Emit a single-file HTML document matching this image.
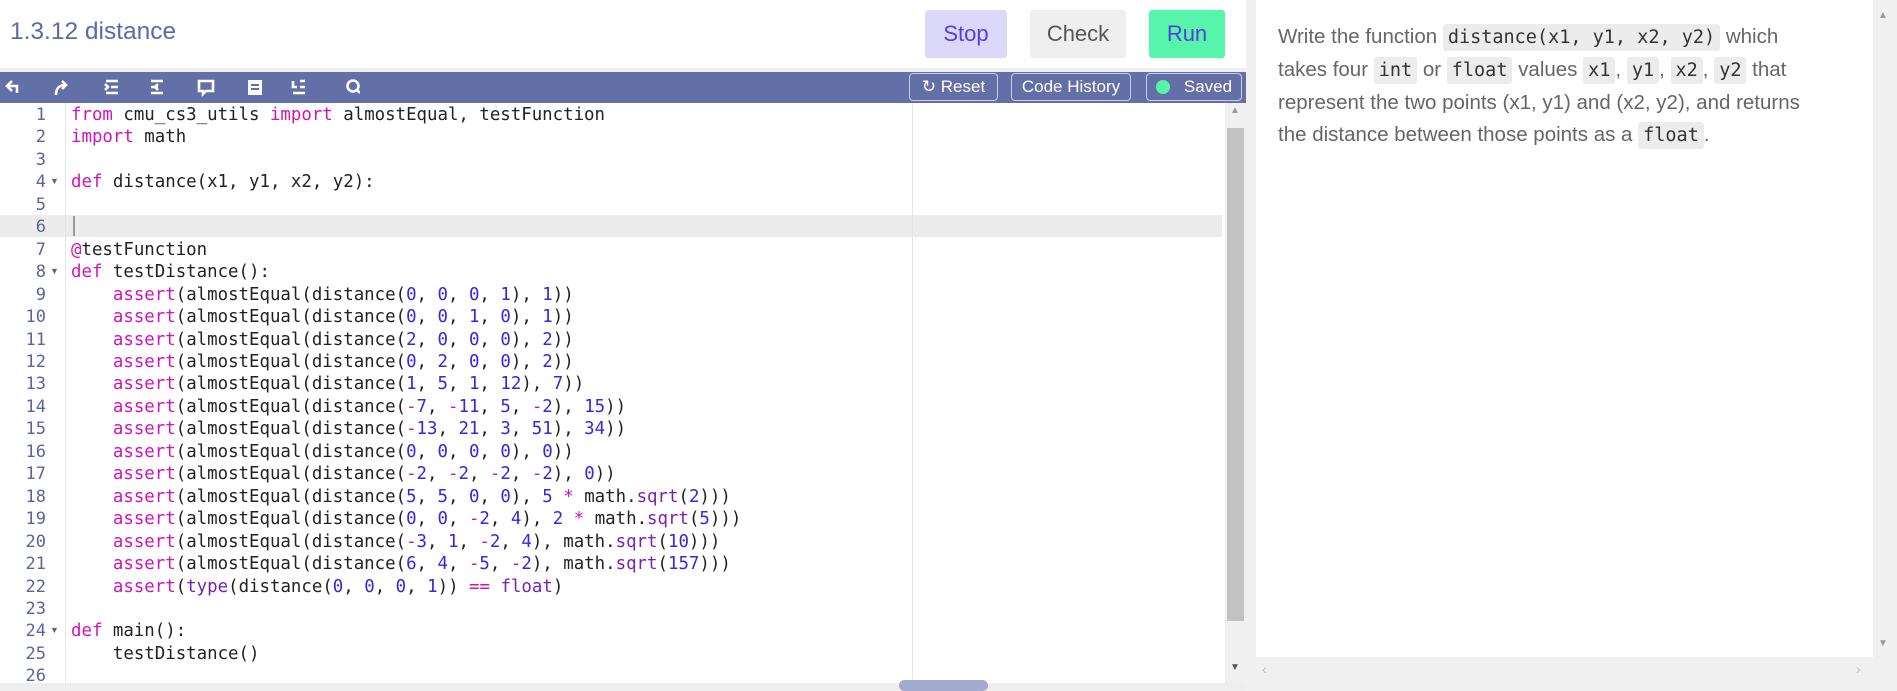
<!DOCTYPE html>
<html><head><meta charset="utf-8"><style>
*{margin:0;padding:0;box-sizing:border-box}
body{width:1897px;height:691px;position:relative;overflow:hidden;background:#fff;font-family:"Liberation Sans",sans-serif}
.abs{position:absolute}
.btn{position:absolute;top:10px;height:48px;border-radius:3px;font-size:22px;display:flex;align-items:center;justify-content:center}
.tb{position:absolute;top:73px;height:28px;border:1px solid #c8cde6;border-radius:4px;color:#fff;font-size:17px;display:flex;align-items:center;justify-content:center}
pre{font-family:"DejaVu Sans Mono",monospace;font-size:17.4px;line-height:22.45px;color:#222}
.k{color:#d014b8}.n{color:#3a25e0}.p{color:#7a22b0}
.ln{position:absolute;left:0;width:46px;text-align:right;color:#5a64a0;font-family:"DejaVu Sans Mono",monospace;font-size:17px;line-height:22.45px}
.desc{position:absolute;left:1278px;top:21px;width:545px;font-size:20.5px;line-height:32px;color:#666}
code{font-family:"DejaVu Sans Mono",monospace;font-size:18.5px;background:#ececec;color:#333;padding:3px 5px;border-radius:3px}
</style></head><body>
<div class="abs" style="left:10px;top:18px;font-size:24.5px;color:#5a6aaa">1.3.12 distance</div>
<div class="btn" style="left:925px;width:82px;background:#dcd8fa;color:#5a3ae6">Stop</div>
<div class="btn" style="left:1030px;width:96px;background:#efefef;color:#555">Check</div>
<div class="btn" style="left:1149px;width:76px;background:#56f5a9;color:#5a3ae6">Run</div>
<div class="abs" style="left:0;top:68px;width:1246px;height:5px;background:#eee"></div>
<div class="abs" style="left:0;top:72px;width:1246px;height:31px;background:#6370a8"></div>
<svg class="abs" style="left:0;top:72px" width="360" height="31" fill="none" stroke="#fff" stroke-width="2.6">
<path d="M17 21v-7h-9M12 9l-5 5 5 5"/>
<path d="M56 23c0-6 3-10 9-10M62 9l4 4-4 4"/>
<path d="M106 9h12M111 15h7M106 21h12M105 12l3 3-3 3"/>
<path d="M151 9h12M151 15h7M151 21h12M158 12l-3 3 3 3"/>
<path d="M199 9h14v10h-7l-3 3v-3h-4z"/>
<rect x="248" y="8" width="14" height="15" fill="#fff" stroke="none"/><path d="M251 13h8M251 17h8" stroke="#6370a8" stroke-width="2"/>
<path d="M293 9v6h4M300 9h5M300 15h5M293 21h12"/>
<circle cx="353" cy="14" r="5.5"/><path d="M357 18l3 3"/>
</svg>
<div class="tb" style="left:909px;width:89px">↻ Reset</div>
<div class="tb" style="left:1011px;width:120px">Code History</div>
<div class="tb" style="left:1146px;width:96px"><span style="width:14px;height:14px;border-radius:50%;background:#56f5a9;margin-right:14px"></span>Saved</div>
<div class="abs" style="left:0;top:215px;width:1222px;height:22px;background:#ececec"></div>
<div class="abs" style="left:65px;top:103px;width:1px;height:580px;background:#e5e5e5"></div>
<div class="abs" style="left:912px;top:103px;width:1px;height:580px;background:#e5e5e5"></div>
<div class="abs" style="left:73px;top:216px;width:2px;height:20px;background:#999"></div>
<div class="abs" style="left:1225px;top:103px;width:21px;height:580px;background:#f0f0f0"></div>
<div class="abs" style="left:1227px;top:128px;width:17px;height:493px;background:#c2c2c2"></div>
<div class="abs" style="left:1230px;top:105px;font-size:10px;color:#999">▲</div>
<div class="abs" style="left:1230px;top:662px;font-size:10px;color:#555">▼</div>
<div class="abs" style="left:1246px;top:0;width:10px;height:691px;background:#f0f0f0"></div>
<div class="abs" style="left:0;top:683px;width:1246px;height:8px;background:#eee"></div>
<div class="abs" style="left:899px;top:680px;width:89px;height:11px;border-radius:6px;background:#a2aacf"></div>
<div class="abs" style="left:1873px;top:0;width:24px;height:691px;background:#f0f0f0"></div>
<div class="abs" style="left:1878px;top:10px;font-size:10px;color:#999">▲</div>
<div class="abs" style="left:1878px;top:638px;font-size:10px;color:#999">▼</div>
<div class="abs" style="left:1256px;top:657px;width:617px;height:34px;background:#f0f0f0"></div>
<div class="abs" style="left:1262px;top:661px;font-size:14px;color:#bbb">‹</div>
<div class="abs" style="left:1856px;top:661px;font-size:14px;color:#bbb">›</div>
<div class="desc">Write the function <code>distance(x1, y1, x2, y2)</code> which takes four <code>int</code> or <code>float</code> values <code>x1</code>, <code>y1</code>, <code>x2</code>, <code>y2</code> that represent the two points (x1, y1) and (x2, y2), and returns the distance between those points as a <code>float</code>.</div>
<div class="abs" style="left:0;top:104px">
<div class="ln" style="top:0;position:relative;left:0">1<br>2<br>3<br>4<br>5<br>6<br>7<br>8<br>9<br>10<br>11<br>12<br>13<br>14<br>15<br>16<br>17<br>18<br>19<br>20<br>21<br>22<br>23<br>24<br>25<br>26</div>
<div class="abs" style="left:50px;top:72px;font-size:9px;color:#666">▼</div>
<div class="abs" style="left:50px;top:162px;font-size:9px;color:#666">▼</div>
<div class="abs" style="left:50px;top:521px;font-size:9px;color:#666">▼</div>
</div>
<pre class="abs" style="left:71px;top:104px"><span class="k">from</span> cmu_cs3_utils <span class="k">import</span> almostEqual, testFunction
<span class="k">import</span> math

<span class="k">def</span> distance(x1, y1, x2, y2):


<span class="k">@</span>testFunction
<span class="k">def</span> testDistance():
    <span class="k">assert</span>(almostEqual(distance(<span class="n">0</span>, <span class="n">0</span>, <span class="n">0</span>, <span class="n">1</span>), <span class="n">1</span>))
    <span class="k">assert</span>(almostEqual(distance(<span class="n">0</span>, <span class="n">0</span>, <span class="n">1</span>, <span class="n">0</span>), <span class="n">1</span>))
    <span class="k">assert</span>(almostEqual(distance(<span class="n">2</span>, <span class="n">0</span>, <span class="n">0</span>, <span class="n">0</span>), <span class="n">2</span>))
    <span class="k">assert</span>(almostEqual(distance(<span class="n">0</span>, <span class="n">2</span>, <span class="n">0</span>, <span class="n">0</span>), <span class="n">2</span>))
    <span class="k">assert</span>(almostEqual(distance(<span class="n">1</span>, <span class="n">5</span>, <span class="n">1</span>, <span class="n">12</span>), <span class="n">7</span>))
    <span class="k">assert</span>(almostEqual(distance(<span class="k">-</span><span class="n">7</span>, <span class="k">-</span><span class="n">11</span>, <span class="n">5</span>, <span class="k">-</span><span class="n">2</span>), <span class="n">15</span>))
    <span class="k">assert</span>(almostEqual(distance(<span class="k">-</span><span class="n">13</span>, <span class="n">21</span>, <span class="n">3</span>, <span class="n">51</span>), <span class="n">34</span>))
    <span class="k">assert</span>(almostEqual(distance(<span class="n">0</span>, <span class="n">0</span>, <span class="n">0</span>, <span class="n">0</span>), <span class="n">0</span>))
    <span class="k">assert</span>(almostEqual(distance(<span class="k">-</span><span class="n">2</span>, <span class="k">-</span><span class="n">2</span>, <span class="k">-</span><span class="n">2</span>, <span class="k">-</span><span class="n">2</span>), <span class="n">0</span>))
    <span class="k">assert</span>(almostEqual(distance(<span class="n">5</span>, <span class="n">5</span>, <span class="n">0</span>, <span class="n">0</span>), <span class="n">5</span> <span class="k">*</span> math.<span class="p">sqrt</span>(<span class="n">2</span>)))
    <span class="k">assert</span>(almostEqual(distance(<span class="n">0</span>, <span class="n">0</span>, <span class="k">-</span><span class="n">2</span>, <span class="n">4</span>), <span class="n">2</span> <span class="k">*</span> math.<span class="p">sqrt</span>(<span class="n">5</span>)))
    <span class="k">assert</span>(almostEqual(distance(<span class="k">-</span><span class="n">3</span>, <span class="n">1</span>, <span class="k">-</span><span class="n">2</span>, <span class="n">4</span>), math.<span class="p">sqrt</span>(<span class="n">10</span>)))
    <span class="k">assert</span>(almostEqual(distance(<span class="n">6</span>, <span class="n">4</span>, <span class="k">-</span><span class="n">5</span>, <span class="k">-</span><span class="n">2</span>), math.<span class="p">sqrt</span>(<span class="n">157</span>)))
    <span class="k">assert</span>(<span class="p">type</span>(distance(<span class="n">0</span>, <span class="n">0</span>, <span class="n">0</span>, <span class="n">1</span>)) <span class="k">==</span> <span class="p">float</span>)

<span class="k">def</span> main():
    testDistance()
</pre>
</body></html>
